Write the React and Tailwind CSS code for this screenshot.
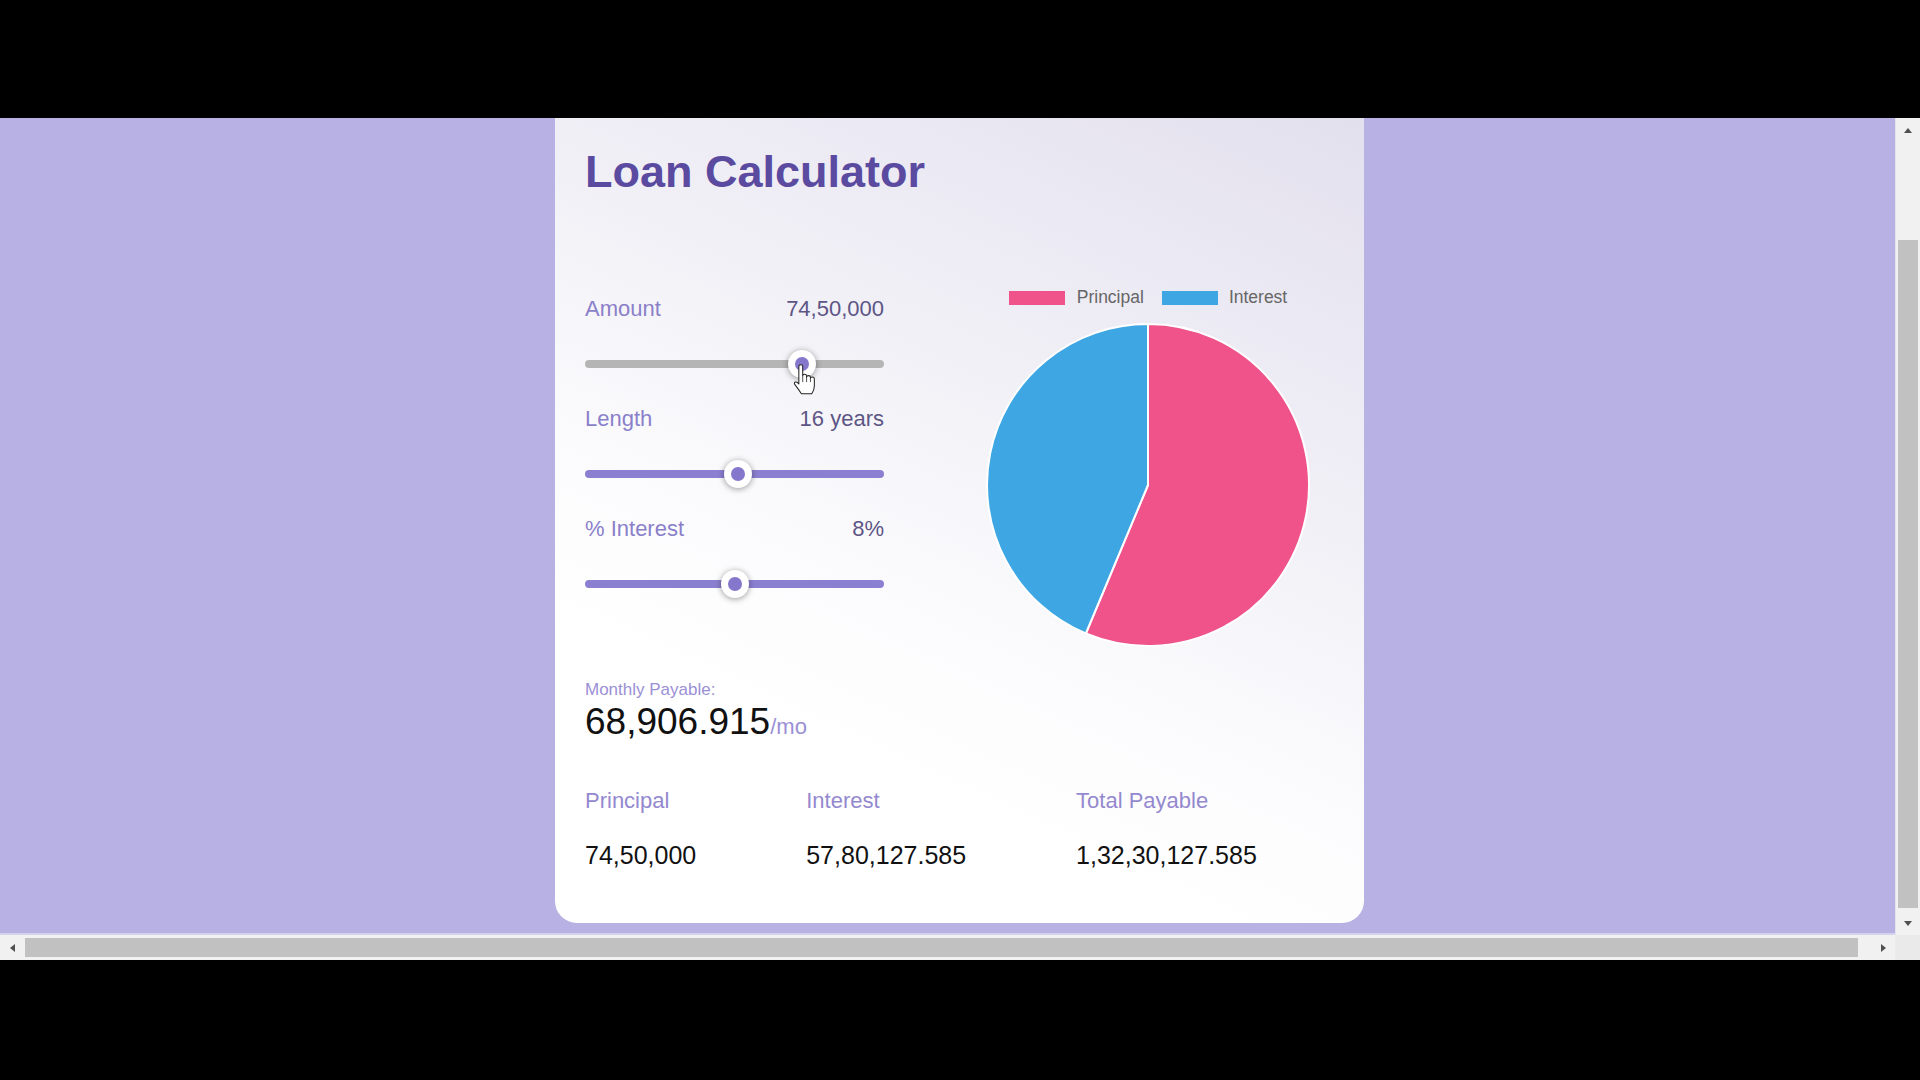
import React from "react";

function Thumb({ left }) {
  return (
    <div
      className="absolute top-0 w-[28px] h-[28px] rounded-full bg-white shadow-[0_1px_6px_rgba(0,0,0,0.4)] flex items-center justify-center"
      style={{ left }}
    >
      <div className="w-[14px] h-[14px] rounded-full bg-[#8577cc]" />
    </div>
  );
}

function Slider({ thumb, gray, children }) {
  return (
    <div className="relative h-[28px] mt-[30px] flex items-center">
      <div className={`w-full h-[8px] rounded-full ${gray ? "bg-[#b5b5b5]" : "bg-[#8b7fd1]"}`} />
      <Thumb left={thumb} />
      {children}
    </div>
  );
}

function Field({ label, value }) {
  return (
    <div className="flex justify-between items-baseline text-[22px] leading-none h-[22px]">
      <span className="text-[#8a7fc9]">{label}</span>
      <span className="text-[#5d5685]">{value}</span>
    </div>
  );
}

function Hand() {
  return (
    <svg
      className="absolute z-10"
      style={{ left: 207, top: 14 }}
      width="24"
      height="31"
      viewBox="0 0 18 24"
    >
      <path
        d="M5,2 Q5,0.5 6.5,0.5 Q8,0.5 8,2 L8,9 Q8,8 9.5,8 Q11,8 11,9.5 L11,10 Q11,9 12.5,9 Q14,9 14,10.5 L14,11 Q14,10 15.5,10 Q17,10 17,11.5 L17,17 Q17,20 15,23 L7,23 Q5,20 2,16 Q1,14.5 2.3,14 Q3.5,13.5 5,15.5 Z"
        fill="white"
        stroke="#222"
        strokeWidth="0.8"
        strokeLinejoin="round"
      />
      <path d="M8,9 L8,14 M11,10 L11,14 M14,11 L14,14" stroke="#222" strokeWidth="0.6" fill="none" />
    </svg>
  );
}

function Pie() {
  return (
    <svg width="330" height="330" viewBox="0 0 330 330" className="mt-[14px]">
      <path
        d="M165,165 L165,4 A161,161 0 1 1 102.82,313.5 Z"
        fill="#f0538a"
        stroke="#ffffff"
        strokeWidth="2"
        strokeLinejoin="round"
      />
      <path
        d="M165,165 L102.82,313.5 A161,161 0 0 1 165,4 Z"
        fill="#3fa6e4"
        stroke="#ffffff"
        strokeWidth="2"
        strokeLinejoin="round"
      />
    </svg>
  );
}

function Triangle({ dir }) {
  const paths = {
    up: "M1,7 L5,2 L9,7 Z",
    down: "M1,3 L5,8 L9,3 Z",
    left: "M7,1 L2,5 L7,9 Z",
    right: "M3,1 L8,5 L3,9 Z",
  };
  return (
    <svg width="10" height="10" viewBox="0 0 10 10">
      <path d={paths[dir]} fill="#505050" />
    </svg>
  );
}

export default function App() {
  return (
    <div className="w-[1920px] h-[1080px] bg-black flex flex-col overflow-hidden font-['Liberation_Sans',Arial,sans-serif]">
      <div className="h-[118px] shrink-0" />
      <div className="flex h-[817px] shrink-0">
        <div className="flex-1 bg-[#b8b1e3] pl-[555px] border-b-[2px] border-[#d6d2ee]">
          <div className="w-[809px] h-[805px] rounded-b-[22px] bg-[linear-gradient(205deg,#e3e0ee_0%,#f2f1f7_38%,#fbfbfd_58%,#ffffff_75%)] px-[30px] pt-[31px]">
            <h1 className="text-[45px] leading-none font-bold text-[#5a4aa0] h-[45px]">Loan Calculator</h1>

            <div className="flex h-[362px] mt-[94px]">
              <div className="w-[299px] pt-[10px]">
                <Field label="Amount" value="74,50,000" />
                <Slider thumb={203} gray>
                  <Hand />
                </Slider>
                <div className="mt-[30px]">
                  <Field label="Length" value="16 years" />
                </div>
                <Slider thumb={139} />
                <div className="mt-[30px]">
                  <Field label="% Interest" value="8%" />
                </div>
                <Slider thumb={136} />
              </div>

              <div className="w-[330px] ml-[99px] flex flex-col items-center">
                <div className="flex items-center h-[17px] mt-[1px] text-[17.5px] leading-none text-[#666666]">
                  <div className="w-[56px] h-[14px] bg-[#f0538a]" />
                  <span className="ml-[12px]">Principal</span>
                  <div className="w-[56px] h-[14px] bg-[#3fa6e4] ml-[18px]" />
                  <span className="ml-[11px]">Interest</span>
                </div>
                <Pie />
              </div>
            </div>

            <div className="mt-[31px] text-[17px] leading-none h-[17px] text-[#9b90d5]">Monthly Payable:</div>
            <div className="mt-[5px] flex items-baseline leading-none">
              <span className="text-[37px] text-[#111111]">68,906.915</span>
              <span className="text-[22px] text-[#9b90d5]">/mo</span>
            </div>

            <div className="mt-[50px] flex gap-[110px] leading-none">
              <div className="flex flex-col">
                <span className="text-[22px] h-[22px] text-[#9489cf]">Principal</span>
                <span className="text-[25px] mt-[31px] text-[#111111]">74,50,000</span>
              </div>
              <div className="flex flex-col">
                <span className="text-[22px] h-[22px] text-[#9489cf]">Interest</span>
                <span className="text-[25px] mt-[31px] text-[#111111]">57,80,127.585</span>
              </div>
              <div className="flex flex-col">
                <span className="text-[22px] h-[22px] text-[#9489cf]">Total Payable</span>
                <span className="text-[25px] mt-[31px] text-[#111111]">1,32,30,127.585</span>
              </div>
            </div>
          </div>
        </div>

        <div className="w-[25px] bg-[#f1f1f1] border-l border-[#e4e4ea] flex flex-col items-center">
          <div className="h-[25px] flex items-center justify-center">
            <Triangle dir="up" />
          </div>
          <div className="flex-1 w-full px-[2px] pt-[97px] pb-[2px] flex flex-col">
            <div className="flex-1 bg-[#c1c1c1]" />
          </div>
          <div className="h-[25px] flex items-center justify-center">
            <Triangle dir="down" />
          </div>
        </div>
      </div>

      <div className="flex h-[25px] shrink-0 bg-[#f1f1f1]">
        <div className="w-[25px] flex items-center justify-center">
          <Triangle dir="left" />
        </div>
        <div className="flex-1 py-[3px] pr-[12px]">
          <div className="h-full bg-[#c1c1c1]" />
        </div>
        <div className="w-[25px] flex items-center justify-center">
          <Triangle dir="right" />
        </div>
        <div className="w-[25px] bg-[#eaeaea]" />
      </div>
      <div className="flex-1" />
    </div>
  );
}
